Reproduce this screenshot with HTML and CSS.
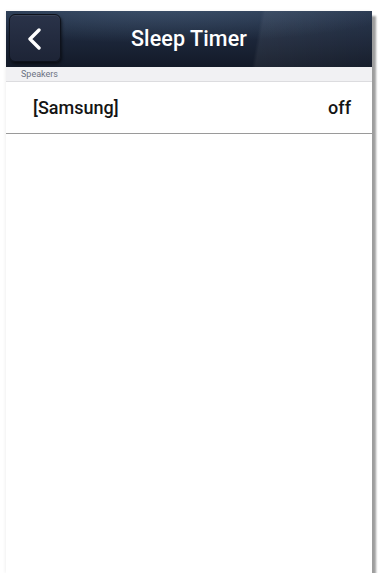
FILE: index.html
```html
<!DOCTYPE html>
<html>
<head>
<meta charset="utf-8">
<link rel="stylesheet" href="styles.css">
</head>
<body>
<div class="device">
  <header class="topbar">
    <button class="back" aria-label="Back">
      <svg width="16" height="22" viewBox="0 0 16 22"><path d="M13 2 L4 11 L13 20" fill="none" stroke="#fff" stroke-width="3.4" stroke-linecap="round" stroke-linejoin="round"/></svg>
    </button>
    <h1 class="title">Sleep Timer</h1>
  </header>
  <div class="section">Speakers</div>
  <div class="row">
    <span class="name">[Samsung]</span>
    <span class="value">off</span>
  </div>
</div>
</body>
</html>
```

FILE: styles.css
```css
html, body {
  margin: 0;
  padding: 0;
  background: #ffffff;
}
body {
  font-family: Roboto, "Noto Sans", sans-serif;
}
.device {
  margin: 11px 0 0 6px;
  width: 366px;
  height: 562px;
  background: #ffffff;
  box-shadow: 4px 5px 2px rgba(0,0,0,0.38), -1px 0 3px rgba(0,0,0,0.06);
  display: flex;
  flex-direction: column;
}
.topbar {
  position: relative;
  height: 56px;
  display: flex;
  align-items: center;
  justify-content: center;
  background:
    radial-gradient(ellipse 260px 40px at 150px -8px, rgba(110,140,170,0.35) 0%, rgba(110,140,170,0.15) 60%, rgba(0,0,0,0) 100%),
    linear-gradient(100deg, rgba(255,255,255,0) 68%, rgba(255,255,255,0.06) 69%, rgba(255,255,255,0.02) 100%),
    linear-gradient(180deg, #24334b 0%, #1b2538 55%, #131a28 100%);
}
.back {
  position: absolute;
  left: 3px;
  top: 3px;
  width: 52px;
  height: 48px;
  border-radius: 6px;
  border: 1px solid #0e121c;
  background: linear-gradient(180deg, #2a3349 0%, #1d2436 100%);
  box-shadow: 1px 2px 3px rgba(0,0,0,0.55), inset 0 1px 0 rgba(255,255,255,0.08);
  display: flex;
  align-items: center;
  justify-content: center;
  padding: 0;
}
.back svg {
  margin-left: -3px;
  margin-top: 1px;
}
.title {
  margin: 0 0 1px 0;
  color: #ffffff;
  font-size: 21.5px;
  font-weight: 500;
  letter-spacing: 0.1px;
}
.section {
  height: 14px;
  background: #f1f1f3;
  border-bottom: 1px solid #dcdcdf;
  color: #6c7282;
  font-size: 9px;
  line-height: 14px;
  padding-left: 15px;
}
.row {
  height: 50px;
  display: flex;
  align-items: center;
  justify-content: space-between;
  padding: 0 21px 1px 27px;
  border-bottom: 1px solid #9a9a9a;
  color: #141414;
  font-size: 18px;
  font-weight: 500;
}
```
